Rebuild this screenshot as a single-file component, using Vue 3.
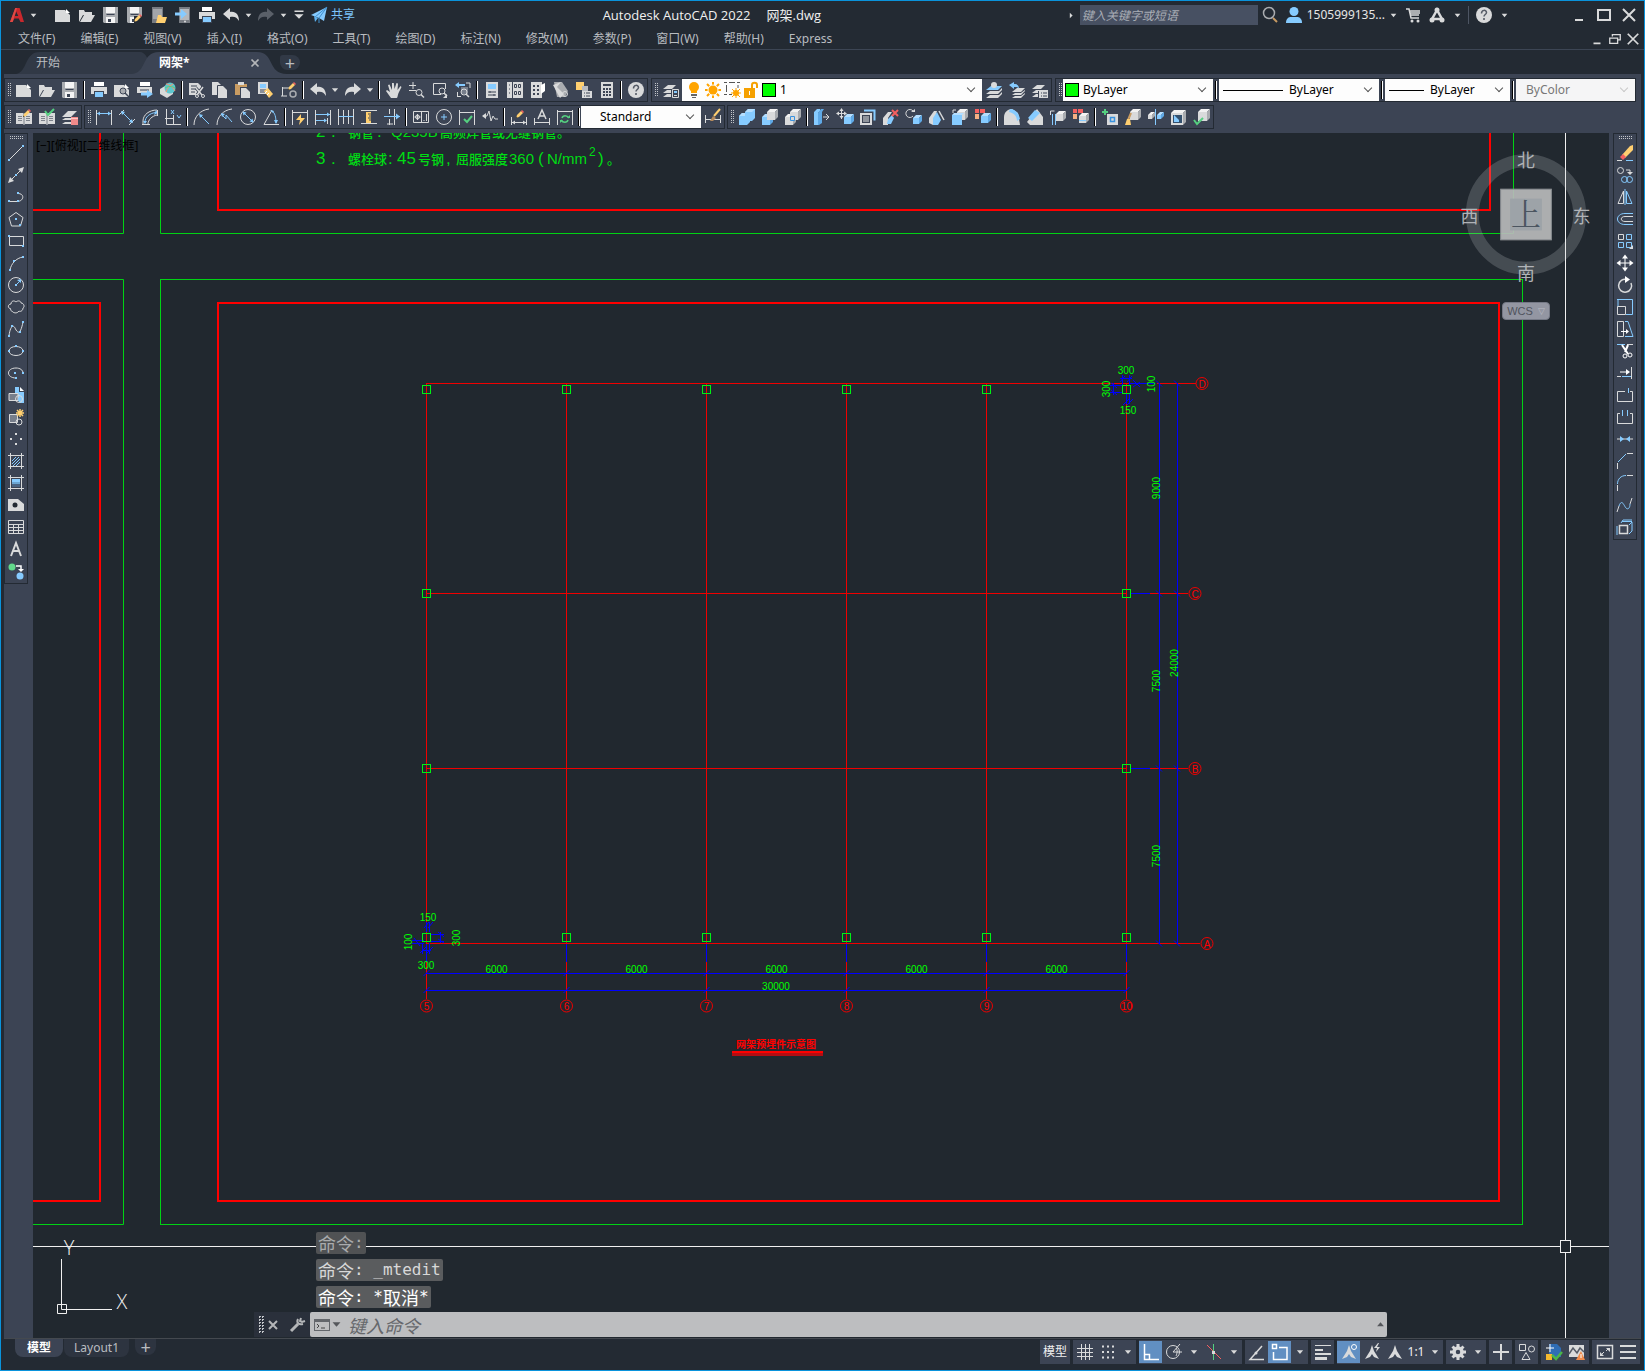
<script setup>
import { ref } from 'vue'

const W = '#d9dadb', B = '#86cbff', Y = '#ffcf70', G = '#55d080', R = '#f46060', K = '#3c4454', S = '#a9acb0'

// stroke, fill and circle helpers for the 16x16 icon set
const s = (d, c = W, w = 1) => `<path d="${d}" fill="none" stroke="${c}" stroke-width="${w}"/>`
const f = (d, c = W) => `<path d="${d}" fill="${c}"/>`
const o = (x, y, r, c = W, w = 1) => `<circle cx="${x}" cy="${y}" r="${r}" fill="none" stroke="${c}" stroke-width="${w}"/>`
const d = (x, y, r, c = W) => `<circle cx="${x}" cy="${y}" r="${r}" fill="${c}"/>`
const q = (...pts) => pts.map(([x, y]) => f(`M${x - 1} ${y - 1}h2v2h-2z`, B)).join('')
const cube = (x, y, n, c = W, t = '#f2f2f2', r = S) =>
  f(`M${x} ${y + 3}h${n}v${n}h-${n}z`, c) + f(`M${x} ${y + 3}l3-3h${n}l-3 3z`, t) + f(`M${x + n} ${y + 3}l3-3v${n}l-3 3z`, r)
const bcube = (x, y, n) => cube(x, y, n, B, '#b5dfff', '#5fa9e6')
const pencil = (x, y) => f(`M${x} ${y + 7}l1-3 4-4 2 2-4 4z`, Y) + f(`M${x + 5} ${y}l1-1 2 2-1 1z`, R) + f(`M${x} ${y + 7}l.5-1.5 1 1z`, '#222')
const lens = (x, y) => o(x, y, 3) + s(`M${x + 2} ${y + 2}l3 3`, W, 1.5)
const floppy = f('M0 0h15v16H1l-1-1z', S) + f('M3 0h9v6H3z', '#f4f4f4') + f('M3 10h9v6H3z', '#f4f4f4') + s('M3.5 7.5h8', K) + f('M5 12h3v3H5z', K)
const printer = f('M3 0h10v4H3z', '#fff') + f('M0 5h16v7H0z') + f('M3 9h10v7H3z', K) + f('M4 10h8v5H4z', B)
const folder = f('M0 15V3h5l1 2h7v3H4z') + f('M1 15L5 8h11l-4 7z')
const page = f('M0 3h10l5 5v7H0z') + f('M11 2l4 4h-4z', '#fff')
const stack = f('M0 7l5-4h8l-4 4z') + f('M0 11l4-3h8l-3 3z') + f('M0 15l4-3h8l-3 3z')
const dim = s('M.5 1v15M15.5 1v15')
const star = s('M8 0v16M0 8h16M2 2l12 12M14 2L2 14', '#ffa400', 2)
const annot = f('M8 1l2 6 5 8-5-2-2-3-2 3-5 2 5-8z')
const openbook = f('M0 4h7l1 1 1-1h7v11H9l-1 1-1-1H0z') + s('M2 7.500h4M2 9.500h4M2 11.500h4M10 7.500h4M10 9.500h4M10 11.500h4M8 5v10', '#7d828b')

const icons = {
  logo: f('M6 0h5l5 16h-4l-2-4H5l-2 4H0zM7 4L5.500 9h4z', '#c9282d') + f('M6 0h2L3 16H0z', '#e04a45'),
  new: page, open: folder, save: floppy, print: printer,
  saveas: floppy + f('M7 9h9v7H7z', '#232a33') + pencil(7, 8),
  mopen: f('M1 0h11v16H1z', '#777b82') + f('M2 2h9v10H2z', '#a2a5aa') + f('M5 16l2-8h3l1 2h5l-2 6z', Y),
  msave: f('M4 0h11v16H4z', '#777b82') + f('M5 2h9v11H5z', '#b5b8bc') + s('M0 7h8', B, 3) + f('M6 2l6 5-6 5z', B) + d(10, 14.5, 1),
  undo: f('M0 7l7-6v4c6-1 9 3 9 9-2-4-5-5-9-4v3z'),
  redo: f('M16 7L9 1v4C3 4 0 8 0 14c2-4 5-5 9-4v3z'),
  redooff: f('M16 7L9 1v4C3 4 0 8 0 14c2-4 5-5 9-4v3z', '#5a6069'),
  caret: f('M3 5h10l-5 6z'),
  more: f('M2 2h12v2H2zM2 7h12l-6 6z'),
  share: f('M0 8L16 0l-3 14-5-3z', B) + s('M4 10l12-10L8 11v5', '#3f90cf') + f('M3 9l1 6 3-4z', '#5fb3f0'),
  search: o(7, 6, 5.5, S, 1.5) + s('M11 11l4 4', '#c89a62', 2),
  user: d(8, 4.500, 4.500, B) + f('M0 16c0-5 3-6 5-6h6c2 0 5 1 5 6z', B),
  cart: s('M1 2h3l2 9h8M4 4h11M5 6h10M5 8h9', W, 1.5) + d(7, 14, 1.5) + d(13, 14, 1.5),
  apps: s('M8 3L3 12h10z', W, 2.500) + d(8, 3, 2.500) + d(3, 13, 2.500) + d(13, 13, 2.500),
  help: d(8, 8, 8) + s('M5.500 6.500c0-4 5-4 5-1 0 2-2.500 2-2.500 4', '#555b66', 1.500) + f('M7.200 11h1.600v2H7.200z', '#555b66'),
  preview: page + lens(9, 9) + d(9, 9, 2.500, S) + o(9, 9, 3, K) + s('M11 11l4 4', K, 1.500),
  plot: f('M3 0h10v4H3z', '#fff') + f('M0 5h15v6H0z') + s('M3 8h9', K) + s('M4 12h7', B, 3) + f('M10 8l6 4-6 4z', B),
  globe: f('M0 7l5-3 8 2v6l-6 4-7-4z') + d(10, 6, 5.500, '#5dc7cf') + s('M6 2c4 0 8 5 9 7M13 2c-4 2-6 5-7 8', '#ff8f6a') + s('M5 6c3-2 7-2 10 0', G),
  cut: f('M0 1h9l3 3v9H0z') + s('M2 4h6M2 7h6M2 10h4', K) + s('M7 6l6 7M14 5l-6 8', K, 3) + s('M7 6l6 7M14 5l-6 8', W, 1.500) + o(8, 14, 1.5) + o(14, 14, 1.5),
  copy: f('M0 0h6l3 3v10H0z') + s('M5.500 3.500h6l3 3v9h-9z', K) + f('M6 4h5l4 4v8H6z'),
  paste: f('M0 2h12v11H0z', '#c99c62') + f('M3 0h6v3H3z') + f('M5 5h7l4 4v7H5z', K) + f('M6 6h5l4 4v6H6z'),
  match: f('M0 0h10v12H0z') + f('M2 2h6v4H2z', B) + s('M2 8h6M2 10h6', K) + f('M6 9l4-3 5 6-4 4z', Y) + s('M9 9l-2 2M11 11l-2 2', '#fff'),
  edit: s('M0 14h6M1.500 5v9M2 6h7') + o(12, 12, 3, S, 1.5) + pencil(7, 1),
  pan: f('M5 16L0 9l1-1 3 2L2 3l1.500-.5L6 8V1h1.800L8.500 7l2-6 1.500.5L11.500 8 14.500 4l1 1-3 6c-1 3-1 5-2 5z'),
  zoom: s('M4 0v7M0 3.500h7M0 8.500h7') + lens(10, 10.500),
  zoomwin: s('M9 12.500H1.500V1.500h12V7') + lens(10, 9) + f('M15 12v4h-4z'),
  zoomprev: s('M2 14.500h4M2.500 10v4M11 1h4v5', W) + f('M6 5h7v7H6z', '#777e8b') + lens(9, 10) + f('M0 3l4-3v2h6v2H4v2z', B),
  props: f('M2 0h12v16H2z') + f('M4 2h8v5H4z', B) + s('M4 10h8M4 13h8M6 9v2M10 12v2', K),
  center: f('M0 0h16v16H0z') + s('M5.500 0v16M2 3h1M2 7h1M2 11h1', K) + s('M7.500 2.500h2v3h-2zM11.500 2.500h2v3h-2zM7.500 9.500h2v3h-2zM11.500 9.500h2v3h-2z', K),
  palette: f('M1 0h11v16H1z') + s('M3 4h2M7 4h2M3 8h2M7 8h2M3 12h2M7 12h2', K, 2) + f('M11 3l4-2v8l-4 3z', '#fff'),
  sheet: f('M1 0h8l6 9-3 6H4z', S) + f('M0 3l8-3-4 5 7 7-4 4z') + o(12, 12, 2.500),
  markup: f('M0 0h8v8H0z', Y) + f('M6 4h6v6H6z', '#b8bbc1') + f('M6 9h10v7H6z') + s('M8 11h1M10 11h4M8 14h1M10 14h4', K),
  calc: f('M2 0h12v16H2z') + f('M4 2h8v2H4z', K) + s('M4 7h2M7 7h2M10 7h2M4 10h2M7 10h2M10 10h2M4 13h2M7 13h2M10 13h2', K, 2),
  layers: stack + f('M8 7h8v9H8z', K) + s('M9.500 7.500h6v8h-6z') + f('M11 9h3v2h-3z', B) + s('M11 13.500h3'),
  lcur: f('M0 8l5-4h11l-4 4z', B) + f('M0 12l4-3h9l3-3v2l-4 4z') + f('M0 16l4-3h9l3-3v2l-4 4z') + d(8, 3, 3),
  lprev: f('M3 10l5-4h8l-4 4z') + f('M3 13l3-2h6l4-3v1l-4 4z') + f('M3 16l3-2h6l4-3v1l-4 4z') + f('M0 3l5-3v2c4 0 5 2 5 5-1-2-3-2-5-2v2z', B),
  lstate: stack + f('M6 9h10v7H6z', K) + f('M7 8h9v8H7z') + s('M9 11h1M11 11h4M9 14h1M11 14h4', K),
  bedit: openbook + pencil(7, 1),
  bsave: openbook + s('M6 2l3 4 6-6', G, 2),
  bdisc: f('M0 8l6-6h9l-6 6z') + f('M0 11l3-2h7v2l-2 0zM0 15l3-2h6v2z') + f('M9 8h7v8H9z', '#f08a8a') + s('M9 9.500h7', '#ffc4c4'),
  dlin: dim + s('M1 4.500h14', B) + f('M1 4.500l3-2v4zM15 4.500l-3-2v4z', B),
  dali: s('M0 6l5-5M10 16l6-6') + s('M3 3l10 10', B) + f('M2 2l4 1-3 3zM14 14l-4-1 3-3z', B),
  darc: s('M1 15V12C1 6 7 1 15 1M6 15c0-4 4-8 9-9') + s('M3 13C3 8 8 4 14 3.500', B) + f('M14 1l2 3-4 2zM1 12h4l-2 3z', B) + s('M0 15.500h8M15.500 1v6'),
  dord: s('M1.500 0v15.500H16M0 9.500h8M8.500 6v9') + s('M6 1l3 4M9 1L6 5M12 6l2 3 2-3', B),
  drad: s('M0 16C0 8 6 1 15 0') + s('M6 6l9 9', B) + f('M5 5l4 1-3 3z', B),
  djog: s('M0 16C0 8 6 1 15 0') + s('M4 5l5 5v-4l6 7', B) + f('M4 4l4 1-3 3z', B),
  ddia: o(8, 8, 7.500) + s('M3 3l10 10', B) + f('M2.500 2.500l4 1-3 3zM13.500 13.500l-4-1 3-3z', B),
  dang: s('M9 1L1 15.500h15') + s('M9 2c3 2 4 6 4 12', B) + f('M10 4l-3-3 4 1zM13 15l-2-4h4z', B),
  dquick: dim + s('M1 3.500h14') + f('M9 5L4 11h4l-1 5 6-7H9z', Y),
  dbase: dim + s('M1 5.500h14M1 11.500h10', B) + f('M15 5.500l-3-2v4zM12 11.500l-3-2v4z', B) + s('M12.500 9v6'),
  dcont: s('M.5 0v16M5.500 1v14M10.500 1v14M15.500 0v16') + s('M1 7.500h14', B),
  dspace: s('M0 1.500h16M0 14.500h16') + f('M5 3h5v11H5z', Y) + s('M7 5h3M8 7h2M7 9h3M8 11h2', K),
  dbreak: s('M5.500 0v5M5.500 10v6M10.500 0v16M3 15h6') + s('M0 7.500h16', B) + f('M16 7.500l-4-3v6z', B),
  tol: s('M.5 2.500h15v11H.5zM8.500 3v10') + o(4.500, 8, 2) + s('M1.500 8h6M4.500 5v6') + s('M11 12v-1M13.500 5v7'),
  cmark: o(8, 8, 7.500) + s('M8 5v6M5 8h6', B),
  insp: dim + s('M1 3.500h14') + s('M5 10l3 3 5-6', G, 2),
  jog: s('M1 7h4l2-5 2 10 2-5 2 3h3') + f('M0 7l4-3v6z'),
  dedit: s('M.5 8v8M15.500 8v8M1 13.500h14') + f('M1 13.500l3-2v4zM15 13.500l-3-2v4z') + pencil(5, 2),
  dtedit: s('M.5 9v7M15.500 9v7M1 13.500h14') + s('M4 10l4-9 4 9M5.500 7h5', W, 1.5),
  dupd: dim + s('M1 2.500h14') + s('M5 9c1-3 5-3 7 0M11 11c-1 3-5 3-7 0', G, 1.500) + f('M10 9h3V6zM3 11h3l-3 3z', G),
  dstyle: s('M.5 6v8M15.500 6v8M1 10.500h14') + f('M5 12l3-5 3 2-3 3z', '#b58a5c') + s('M9 7l6-7', Y, 2),
  union: f('M0 7l3-3h3V3l3-3h7v9l-3 3h-2v1l-3 3H0z', B) + f('M6 3l3-3h7l-3 3zM0 7l3-3h3v3z', '#b5dfff'),
  subt: bcube(0, 5, 8) + cube(5, 0, 8),
  inter: cube(0, 5, 8) + cube(5, 0, 8) + s('M5.500 7.500h4v4h-4z', '#3a93df'),
  extr: f('M0 3l3-3h3v2L4 4v12H0z', B) + f('M4 4l3-4h3L8 3v11l-3 2H4z', '#5fa9e6') + s('M9 8h6M12 5l3 3-3 3'),
  mface: s('M4.500 0v10M0 4.500h9') + f('M4.500-1l2 3h-4zM4.500 10l2-3h-4zM-1 4.500l3-2v4zM10 4.500l-3-2v4z') + bcube(7, 5, 7),
  offs: s('M1 5h10v10H1z', W, 2) + s('M4 1.500h10.500v10', B, 2) + f('M3 7h6v6H3z', '#8f949c'),
  delf: f('M0 16V9l5-6h4l-4 6v7z') + f('M5 10l4-4 2 3-3 6H4z', B) + s('M9 1l6 6M15 1L9 7', R, 2),
  rotf: s('M7 2a4 4 0 1 0 0 5') + f('M5 3h4V0z') + bcube(7, 6, 6),
  taper: f('M0 14V9l5-7h3L4 16z') + f('M4 16V9l4-6 4 8-3 5z', B) + s('M10 2l5 9', W, 1.500),
  copyf: cube(5, 0, 8) + f('M0 6h10v10H0z', B) + f('M0 6l2-2h10l-2 2z', '#b5dfff') + s('M1 4V1h3'),
  colf: f('M0 0h4v4H0z', R) + f('M5 0h5v4H5z', R) + f('M0 5h4v5H0z', '#f5b083') + bcube(6, 4, 7),
  cedge: f('M0 16V8c0-5 4-8 8-8l6 4 2 12z') + f('M6 0c5 0 9 4 10 10l-3 2c0-5-3-8-8-9z', B),
  cedge2: f('M0 13L10 0l6 8v8H3z') + f('M1 9l7-8 5 3-8 8z', B),
  imprint: cube(6, 2, 7) + s('M.5 6V2h4', W) + s('M2.500 5v11M5.500 5v11', B),
  clean: f('M0 0h4v4H0z', R) + f('M5 0h5v4H5z', R) + f('M0 5h4v5H0z', '#f5b083') + cube(6, 4, 7) + s('M6 11.500h7', B),
  sep3d: f('M5 5h11v11H5z') + s('M8.500 8.500h4v4h-4z', '#3a93df', 1.5) + s('M3 0v6M0 3h6', G, 2),
  shell: cube(5, 0, 8) + s('M6 4L3 11', '#c99c62', 2) + f('M0 16l2-6h3l1 6z', Y),
  sepr: cube(0, 3, 4) + bcube(9, 3, 4) + s('M7.500 0v16', B),
  shell2: cube(0, 1, 12) + f('M2 6h9v8H2z', '#33506e') + f('M3 6l5 5v2H3z', B),
  check: cube(4, 0, 9) + s('M0 11l3 4 6-6', G, 2),
  // draw palette
  line: s('M1 15L15 1') + q([1, 15], [15, 1]),
  xline: s('M2 14L14 2') + f('M0 16l2-6 4 4zM16 0l-6 2 4 4z') + q([8, 8]),
  pline: s('M1 12.500h8c7 0 8-8 1-8') + q([1, 12], [10, 4], [10, 12]),
  poly: s('M8 1.500l7 5-2.500 8.500h-9L1 6.500z') + q([8, 8], [12, 14]),
  rect: s('M1.500 3.500h14v9h-14z') + q([1, 3], [15, 13]),
  arc: s('M2 15C3 9 8 3 15 2') + q([2, 15], [6, 6], [15, 2]),
  circle: o(8, 8, 7.500) + q([8, 8]) + s('M8 8l5-5', B) + f('M13 2v4l-4-3z', B),
  cloud: s('M3 10c-4-1-3-5 0-5C3 2 6 1 8 3c2-2 5-1 5 1 3 0 4 4 2 5 0 3-3 4-4 3-2 3-6 2-7 0-1 0-2-1-1-2z'),
  spline: s('M1 15C2 6 5 3 7 7s5 9 8-6') + q([1, 15], [4, 5], [12, 11], [15, 1]),
  ellipse: s('M1 8c0-6 14-6 14 0s-14 6-14 0') + q([1, 8], [8, 3], [15, 8]),
  earc: s('M8 13C-2 13-2 3 8 3c4 0 7 2 7 5') + q([7, 8], [15, 8], [8, 13]),
  insert: f('M7 0h4v5h5v11h-4L7 10z', B) + f('M12 0l4 4h-4z', '#fff') + f('M1 6h9v7H1z', '#777e8b') + s('M1 6.500h9v7H1z') + o(11, 12, 3.500) + q([11, 12]),
  block: f('M1 5h8v8H1z', '#777e8b') + s('M1.500 5.500h8v8h-8z') + o(11, 13, 3) + s('M12 0v8M8 4h8M9 1l6 6M15 1L9 7', Y, 1.500),
  point: f('M7 2h2v2H7zM2 7h2v2H2zM12 7h2v2h-2zM7 12h2v2H7z'),
  hatch: s('M2.500 0v16M13.500 0v16M0 2.500h16M0 13.500h16') + s('M4 8l4-4M4 11l7-7M5 13l7-7M8 13l4-4', B),
  grad: s('M2.500 0v16M13.500 0v16M0 2.500h16M0 13.500h16') + f('M4 4h8v3H4z', B) + f('M4 7h8v2H4z', '#6ba5d2') + f('M4 9h8v3H4z', '#4a6482'),
  region: f('M0 2h10l6 5v7H0z') + d(7, 8, 2.500, '#232a33'),
  table: s('M.5 1.500h15v13H.5zM0 5.500h16M0 8.500h16M0 11.500h16M5.500 5v10M10.500 5v10'),
  mtext: s('M3 15L8 2l5 13M4.500 10h7', W, 2),
  addsel: d(4, 4, 3.500, '#62d98b') + d(12, 13, 3.500, B) + s('M8 3h5v4', '#fff', 1.500) + f('M10 6h6l-3 3z', '#fff'),
  // modify palette
  erase: f('M5 10L13 1l3-1v5l-8 8z', Y) + f('M3 12l3-3 3 3-3 3z', R) + s('M0 15.500h5') + s('M9 15.500h7', B),
  mcopy: o(3.500, 3.500, 3) + s('M9 3h4v3') + f('M10 5h6l-3 3z') + o(7.500, 12.500, 3, B) + o(12.500, 12.500, 3, B),
  mirror: s('M6.500 2v12.500H1z') + s('M9.500 2v12.500H15z', B) + s('M8 0v16', B),
  offset: s('M16 2.500H8C-2 2.500-2 13.500 8 13.500h8', B) + s('M16 5.500H8c-5 0-5 5 0 5h8'),
  array: s('M1.500 1.500h5v5h-5z') + s('M9.500 1.500h5v5h-5zM1.500 9.500h5v5h-5zM9.500 9.500h5v5h-5z', B) + f('M16 12v4h-4z'),
  move: s('M8 1v14M1 8h14', '#fff') + f('M8-.5l3 4H5zM8 16.500l3-4H5zM-.5 8l4-3v6zM16.500 8l-4-3v6z', '#fff'),
  rotate: s('M10 2.500a6.500 6.500 0 1 0 4 3.500', W, 1.500) + f('M8-1l5 3.500L8 6z', '#fff'),
  scale: s('M1 0v8M0 .5h15.500v15H9', B) + s('M.5 7.500h8v8h-8z'),
  stretch: s('M.5.5h6v15h-6z') + s('M8 .5h3l5 15H8', B) + s('M4 10.500h7', '#fff') + f('M9 8l3 2.500L9 13z', '#fff'),
  trim: s('M0 1.500h8', B) + s('M10 1.500h6') + s('M5 2l6 9M11 2L8 9', '#fff', 2) + o(8, 13, 2, '#fff') + o(13, 12, 2, '#fff'),
  extend: s('M14.500 2v12M0 11.500h4') + s('M5 11.500h9', B) + s('M3 7h8', '#fff') + f('M9 4l4 3-4 3z', '#fff'),
  brkpt: s('M8 4.500H.5v10h15v-10H13') + s('M11.500 1v5', B),
  brk: s('M3 4.500H.5v10h15v-10H13') + s('M5.500 1v6M10.500 1v6', B),
  join: s('M0 8h16') + f('M3 5l4 3-4 3zM13 5L9 8l4 3z', B),
  chamfer: s('M.5 10v6M10 .5h6') + s('M1 9l8-8', B),
  fillet: s('M.5 10v6M10 .5h6') + s('M.5 9C.5 4 4 .5 9 .5', B),
  blend: s('M0 15L2 9M13 7l2-6') + s('M2 9c3-8 5 0 7 2s4 0 4-4', B),
  explode: s('M2.500 6.500h8v8h-8z', W, 1.500) + s('M0 7v9M5 2.500h10M4 4l2-3h9M12 6l3-3v9l-3 3', B),
  // status bar
  grid: s('M4.500 0v16M8.500 0v16M12.500 0v16M0 4.500h16M0 8.500h16M0 12.500h16'),
  snap: s('M2 2.500h2M7 2.500h2M12 2.500h2M2 8h2M7 8h2M12 8h2M2 13.500h2M7 13.500h2M12 13.500h2', W, 2),
  ortho: s('M1.500 0v15.500H16M1.500 10.500h5v5', '#fff', 1.500),
  polar: o(7, 8, 6.500) + s('M7 8h9M7 8l7-8M10 4c2 2 1 6 0 8'),
  iso: s('M1 1l14 14', R) + s('M7.500 0v16', G) + f('M6 7h3v3H6z'),
  otrack: s('M15 15.500H1L13 2', W, 1.500) + d(7, 9, 1.500),
  osnap: s('M7 3.500h8v12H1.500V8', '#fff', 1.500) + s('M.5.500h4v4h-4z', '#fff', 1.500),
  lwt: f('M0 1h16v1H0zM0 5h8v2H0zM0 9h16v2H0zM0 13h12v3H0z'),
  ann1: annot + o(13, 3, 2.500, '#fff'),
  ann2: annot + f('M14-1l-4 5h3l-1 4 4-5h-3l2-4z'),
  ann3: annot,
  gear: o(8, 8, 4, W, 3.500) + s('M8 0v3M8 13v3M0 8h3M13 8h3M2.500 2.500l2 2M11.500 11.500l2 2M13.500 2.500l-2 2M4.500 11.500l-2 2', W, 3),
  plus: s('M8 0v16M0 8h16', W, 2),
  isolate: s('M.5.500h6v6h-6zM3 15.500l4-7 4 7z') + o(12.500, 5, 3),
  hw: f('M3 0h8l4 4v9H3z', '#2f6db5') + s('M0 4h8M4 0v8', '#fff') + f('M0 10h6v6H0z', '#f5b92f') + s('M6 11l4 4 6-7', '#4bb648', 2.500),
  graph: f('M0 1h15v12H0z') + s('M0 10l4-6 4 5 3-5 4 4', '#555b66', 1.500) + f('M7 16l5-9 4 9z', '#f08b4b') + s('M12 10v4', '#fff'),
  full: s('M.5 1.500h15v13H.5z', W, 1.500) + f('M9 4h4v4zM3 8v4h4z') + s('M4 11l3-3M9 7l3-3'),
  menu: f('M0 1h16v2H0zM0 7h16v2H0zM0 13h16v2H0z'),
  wmin: s('M4 13h8', W, 2), wmax: s('M2 3h12v10H2z', W, 2), wclose: s('M2 2l12 12M14 2L2 14', W, 2),
  wrest: s('M5 5V3h9v6h-3M2 7h9v6H2z', W, 1.500),
  tri: f('M5 3l5 5-5 5z'), up: f('M2 11h12L8 4z', '#55575b'),
  cmdicon: f('M0 2h16v12H0z', '#63666b') + f('M1 5h14v8H1z', '#bdbec0') + s('M3 7l2 2-2 2M7 11h4', '#444'),
  wrench: s('M2 14l7-7', '#b4b6b8', 3) + s('M9 2c-2 4 1 6 5 5M12 1l-1 3 2 1 3-1', '#b4b6b8', 2),
  x: s('M4 4l8 8M12 4l-8 8', '#b4b6b8', 2),
  bulb: d(8, 5, 5, '#ffa400') + f('M5 8h6v3H5z', '#ffa400') + f('M5 12h6v2H5zM6 15h4v1H6z', '#666'),
  sun: star + d(8, 8, 5.500, '#fdfdfd') + d(8, 8, 4.500, '#ffa400'),
  vp: s('M2.500 3v7M5 .5h6M14 3v3M5 12.500h3M0 .5h3M13 .5h3M0 12.500h3', '#555') + s('M12 6v10M7 11h10M8 7l8 8M16 7l-8 8', '#ffa400') + d(12, 11, 3, '#ffa400'),
  lock: f('M1 6h11v10H1z', '#f5a000') + s('M9 7V3c0-3 5-3 5 0v3', '#f5a000', 2) + f('M6 9h1v4H6z', '#fff'),
}

const quick = [['new', '新建'], ['open', '打开'], ['save', '保存'], ['saveas', '另存为'], ['mopen', '从移动设备打开'], ['msave', '保存到移动设备'], ['print', '打印']]
const menus = ['文件(F)', '编辑(E)', '视图(V)', '插入(I)', '格式(O)', '工具(T)', '绘图(D)', '标注(N)', '修改(M)', '参数(P)', '窗口(W)', '帮助(H)', 'Express']
const std = 'new open save | print preview plot globe | cut copy paste match edit | undo caret redo caret | pan zoom zoomwin zoomprev | props center palette sheet markup calc | help'.split(' ')
const refedit = 'bedit bsave bdisc'.split(' ')
const dims = 'dlin dali darc dord | drad djog ddia dang | dquick dbase dcont dspace dbreak | tol cmark insp jog | dedit dtedit dupd |'.split(' ')
const solids = 'union subt inter | extr mface offs delf rotf taper copyf colf | cedge cedge2 imprint clean | sep3d shell sepr shell2 check'.split(' ')
const draw = 'line xline pline poly rect arc circle cloud spline ellipse earc insert block point hatch grad region table mtext addsel'.split(' ')
const modify = 'erase mcopy mirror offset array move rotate scale stretch trim extend brkpt brk join chamfer fillet blend explode'.split(' ')
const status = [['grid', 'snap', 'caret'], ['ortho', 'polar', 'caret', 'iso', 'caret'], ['otrack', 'osnap', 'caret'], ['lwt'], ['ann1', 'ann2', 'ann3', '1:1', 'caret'], ['gear', 'caret'], ['plus'], ['isolate'], ['hw', 'graph'], ['full', 'menu']]
const active = ['ortho', 'osnap', 'ann1']

// model-space geometry
const cols = [426.5, 566.5, 706.5, 846.5, 986.5, 1126.5]
const rows = [
  { id: 'D', y: 383.5, bx: 1202 }, { id: 'C', y: 593.5, bx: 1195 },
  { id: 'B', y: 768.5, bx: 1195 }, { id: 'A', y: 943.5, bx: 1207 },
]
const pads = [
  ...cols.map((x) => [x, 389.5]), ...cols.map((x) => [x, 937.5]),
  [426.5, 593.5], [1126.5, 593.5], [426.5, 768.5], [1126.5, 768.5],
]
const vdims = [['9000', 1160, 488], ['7500', 1160, 681], ['7500', 1160, 856], ['24000', 1178, 663], ['300', 1110, 389], ['100', 1155, 384], ['100', 412, 942], ['300', 460, 938]]
const hdims = [['300', 1126, 374], ['150', 1128, 414], ['150', 428, 921], ['300', 426, 969], ['30000', 776, 990]]
const command = ref('')
const query = ref('')
</script>

<template>
  <div class="window">
    <header class="titlebar">
      <button class="logo" aria-label="应用程序菜单"><svg viewBox="0 0 16 16" v-html="icons.logo" /></button>
      <button class="mini" aria-label="展开"><svg viewBox="0 0 16 16" v-html="icons.caret" /></button>
      <div class="quick">
        <button v-for="[n, t] in quick" :key="n" class="tool" :aria-label="t"><svg viewBox="0 0 16 16" v-html="icons[n]" /></button>
        <button class="tool" aria-label="放弃"><svg viewBox="0 0 16 16" v-html="icons.undo" /></button>
        <button class="mini" aria-label="放弃列表"><svg viewBox="0 0 16 16" v-html="icons.caret" /></button>
        <button class="tool" aria-label="重做"><svg viewBox="0 0 16 16" v-html="icons.redooff" /></button>
        <button class="mini" aria-label="重做列表"><svg viewBox="0 0 16 16" v-html="icons.caret" /></button>
        <button class="mini wide" aria-label="自定义"><svg viewBox="0 0 16 16" v-html="icons.more" /></button>
        <button class="share"><svg viewBox="0 0 16 16" v-html="icons.share" />共享</button>
      </div>
      <h1 class="title"><span>Autodesk AutoCAD 2022</span><span>网架.dwg</span></h1>
      <div class="account">
        <button class="mini" aria-label="收起"><svg viewBox="0 0 16 16" v-html="icons.tri" /></button>
        <input v-model="query" class="search" type="text" placeholder="键入关键字或短语" aria-label="搜索">
        <button class="tool" aria-label="搜索"><svg viewBox="0 0 16 16" v-html="icons.search" /></button>
        <button class="user"><svg viewBox="0 0 16 16" v-html="icons.user" />1505999135...</button>
        <button class="mini" aria-label="帐户"><svg viewBox="0 0 16 16" v-html="icons.caret" /></button>
        <button class="tool" aria-label="商店"><svg viewBox="0 0 16 16" v-html="icons.cart" /></button>
        <button class="tool" aria-label="应用"><svg viewBox="0 0 16 16" v-html="icons.apps" /></button>
        <button class="mini" aria-label="应用列表"><svg viewBox="0 0 16 16" v-html="icons.caret" /></button>
        <span class="rule" />
        <button class="tool" aria-label="帮助"><svg viewBox="0 0 16 16" v-html="icons.help" /></button>
        <button class="mini" aria-label="帮助列表"><svg viewBox="0 0 16 16" v-html="icons.caret" /></button>
      </div>
      <div class="winbtns">
        <button class="tool" aria-label="最小化"><svg viewBox="0 0 16 16" v-html="icons.wmin" /></button>
        <button class="tool" aria-label="最大化"><svg viewBox="0 0 16 16" v-html="icons.wmax" /></button>
        <button class="tool" aria-label="关闭"><svg viewBox="0 0 16 16" v-html="icons.wclose" /></button>
      </div>
    </header>

    <nav class="menubar">
      <button v-for="m in menus" :key="m" class="menu">{{ m }}</button>
      <div class="docbtns">
        <button aria-label="最小化图形"><svg viewBox="0 0 16 16" v-html="icons.wmin" /></button>
        <button aria-label="还原图形"><svg viewBox="0 0 16 16" v-html="icons.wrest" /></button>
        <button aria-label="关闭图形"><svg viewBox="0 0 16 16" v-html="icons.wclose" /></button>
      </div>
    </nav>

    <div class="filetabs">
      <button class="ftab">
        <svg viewBox="0 0 136 22" preserveAspectRatio="none"><path d="M0 22C12 20 8 0 24 0H124Q132 0 136 22Z" fill="#313946" /></svg>
        <span>开始</span>
      </button>
      <div class="ftab on">
        <svg viewBox="0 0 156 22" preserveAspectRatio="none"><path d="M0 22C16 22 10 0 28 0H126C144 0 136 22 156 22Z" fill="#3c4454" /></svg>
        <span>网架*</span>
        <button class="close" aria-label="关闭"><svg viewBox="0 0 16 16" v-html="icons.x" /></button>
      </div>
      <button class="fadd">+</button>
    </div>

    <div class="work">
      <div class="toolrow">
        <div class="bar">
          <i class="grip" />
          <template v-for="(n, i) in std" :key="i">
            <i v-if="n === '|'" class="sep" />
            <button v-else :class="n === 'caret' ? 'drop' : 'btn'" :aria-label="n"><svg viewBox="0 0 16 16" v-html="icons[n]" /></button>
          </template>
        </div>
        <div class="bar">
          <i class="grip" />
          <button class="btn" aria-label="图层特性"><svg viewBox="0 0 16 16" v-html="icons.layers" /></button>
          <div class="combo layer">
            <select aria-label="图层"><option>1</option></select>
            <div class="deco">
              <svg v-for="n in ['bulb', 'sun', 'vp', 'lock']" :key="n" viewBox="0 0 16 16" v-html="icons[n]" />
              <b class="swatch" />
            </div>
          </div>
          <button v-for="n in ['lcur', 'lprev', 'lstate']" :key="n" class="btn" :aria-label="n"><svg viewBox="0 0 16 16" v-html="icons[n]" /></button>
        </div>
        <div class="bar">
          <i class="grip" />
          <div class="combo color"><select aria-label="颜色"><option>ByLayer</option></select><div class="deco"><b class="swatch" /></div></div>
          <i class="sep" />
          <div class="combo ltype"><select aria-label="线型"><option>ByLayer</option></select><div class="deco"><b class="dash" /></div></div>
          <i class="sep" />
          <div class="combo lweight"><select aria-label="线宽"><option>ByLayer</option></select><div class="deco"><b class="dash" /></div></div>
          <i class="sep" />
          <div class="combo pstyle"><select aria-label="打印样式" disabled><option>ByColor</option></select></div>
        </div>
      </div>

      <div class="toolrow">
        <div class="bar">
          <i class="grip" />
          <button v-for="n in refedit" :key="n" class="btn" :aria-label="n"><svg viewBox="0 0 16 16" v-html="icons[n]" /></button>
        </div>
        <div class="bar">
          <i class="grip" />
          <template v-for="(n, i) in dims" :key="i">
            <i v-if="n === '|'" class="sep" />
            <button v-else class="btn" :aria-label="n"><svg viewBox="0 0 16 16" v-html="icons[n]" /></button>
          </template>
          <div class="combo dstyle"><select aria-label="标注样式"><option>Standard</option></select></div>
          <button class="btn" aria-label="标注样式管理"><svg viewBox="0 0 16 16" v-html="icons.dstyle" /></button>
        </div>
        <div class="bar">
          <i class="grip" />
          <template v-for="(n, i) in solids" :key="i">
            <i v-if="n === '|'" class="sep" />
            <button v-else class="btn" :aria-label="n"><svg viewBox="0 0 16 16" v-html="icons[n]" /></button>
          </template>
        </div>
      </div>

      <div class="stage">
        <aside class="palette">
          <i class="grip" />
          <button v-for="n in draw" :key="n" :aria-label="n"><svg viewBox="0 0 16 16" v-html="icons[n]" /></button>
        </aside>

        <main class="canvas">
          <svg class="model" viewBox="33 133 1576 1205" preserveAspectRatio="xMidYMid slice">
            <g class="note">
              <text y="137">
                <tspan x="316">2</tspan><tspan x="331">.</tspan><tspan x="348" class="cjk">钢管</tspan><tspan x="377">:</tspan>
                <tspan x="391" class="narrow">Q235B</tspan><tspan x="440" class="cjk">高频焊管或无缝钢管。</tspan>
              </text>
              <text y="164">
                <tspan x="316">3</tspan><tspan x="331">.</tspan><tspan x="348" class="cjk">螺栓球</tspan><tspan x="388">:</tspan>
                <tspan x="397">45</tspan><tspan x="418" class="cjk">号钢</tspan><tspan x="446">,</tspan>
                <tspan x="456" class="cjk">屈服强度</tspan><tspan x="509" class="narrow">360</tspan><tspan x="538">(</tspan>
                <tspan x="547" class="narrow">N/mm</tspan><tspan x="589" y="156" class="sup">2</tspan><tspan x="598" y="164">)</tspan><tspan x="607" class="cjk">。</tspan>
              </text>
            </g>

            <g class="green">
              <path d="M33 233.5H123.500V133M160.500 133V233.500H1513.500V133M33 279.500H123.500V1224.500H33" />
              <rect x="160.5" y="279.500" width="1362" height="945" />
            </g>
            <g class="red thick">
              <path d="M33 210H100V133M218 133V210H1490V133M33 303H100V1201H33" />
              <rect x="218" y="303" width="1281" height="898" />
            </g>

            <g class="red">
              <path v-for="x in cols" :key="x" :d="`M${x} 383.500V943M${x} 962V999`" />
              <path d="M426 383.500H1134M1157 383.500H1196M426 593.500H1126M1150 593.500H1188M426 768.500H1126M1150 768.500H1188M426 943.500H1200" />
              <circle v-for="r in rows" :key="r.id" :cx="r.bx" :cy="r.y" r="6" />
              <circle v-for="x in cols" :key="x" :cx="x" cy="1006" r="6" />
            </g>
            <g class="blue">
              <path v-for="x in cols" :key="x" :d="`M${x} 944V962M${x - 3} 976l6-6M${x - 3} 993l6-6`" />
              <path d="M426 973.500H1127M426 990.500H1127M1159.500 383V944M1177.500 383V944M1131 593.500H1150M1131 768.500H1150" />
              <path v-for="r in rows" :key="r.id" :d="`M1156 ${r.y - 3}l6 6M1174 ${r.y - 3}l6 6`" />
              <path d="M1122.500 375V385M1129.500 375V385M1120 382l5-6M1127 382l5-6M1120 378.500H1132M1110 385.500H1122M1110 392.500H1122M1113.500 383V395M1111 383l6 5M1111 390l6 5M1130 383.500H1155M1133 380l7 7M1133 387l7-5M1126.500 394V404M1129.500 394V404M1123 405l6-6M1127 405l6-6" />
              <path d="M426.500 922V932M429.500 922V932M424 928l5-6M428 928l5-6M431 934.500H444M431 941.500H444M440.500 932V943M438 932l6 5M438 939l6 4M412 940.500H424M412 943.500H424M414 938l6 8M422.500 943V954M429.500 943V954M420 953l6-6M427 953l6-6M422 950.500H431" />
            </g>
            <g class="green pads">
              <rect v-for="([x, y], i) in pads" :key="i" :x="x - 4" :y="y - 4" width="8" height="8" />
            </g>

            <g class="dimtext">
              <text v-for="x in cols.slice(0, 5)" :key="x" :x="x + 70" y="973">6000</text>
              <text v-for="([t, x, y], i) in hdims" :key="i" :x="x" :y="y">{{ t }}</text>
              <text v-for="([t, x, y], i) in vdims" :key="i" :transform="`translate(${x} ${y}) rotate(-90)`">{{ t }}</text>
            </g>
            <g class="bubbletext">
              <text v-for="(x, i) in cols" :key="x" :x="x" y="1010">{{ i + 5 }}</text>
              <text v-for="r in rows" :key="r.id" :x="r.bx" :y="r.y + 4">{{ r.id }}</text>
            </g>
            <text class="caption" x="776" y="1048">网架预埋件示意图</text>
            <path d="M732 1052H823" stroke="#f00" stroke-width="2" />
            <path d="M732 1054.500H823" stroke="#b30d12" stroke-width="3" />

            <g class="cursor">
              <path d="M33 1246.500H1609M1565.500 133V1240M1565.500 1253V1338" />
              <rect x="1560.500" y="1240.500" width="10" height="12" fill="#21282f" />
              <path d="M61.500 1259V1309.500H112M57.500 1304.500h9v9h-9z" />
            </g>
            <text class="axis" x="69" y="1255">Y</text>
            <text class="axis" x="122" y="1309">X</text>
          </svg>

          <p class="viewlabel">[−][俯视][二维线框]</p>

          <div class="viewcube">
            <svg viewBox="0 0 132 170">
              <circle cx="66" cy="82" r="54" fill="none" stroke="#c8ccd2" stroke-opacity=".22" stroke-width="13" />
              <rect x="40.500" y="56.500" width="51" height="51" fill="#b8babb" fill-opacity=".92" stroke="#8b8f93" />
              <rect x="50" y="66" width="32" height="32" fill="#9da3a8" />
              <text x="66" y="93" class="top">上</text>
              <text x="66" y="34">北</text><text x="66" y="148">南</text><text x="9" y="91">西</text><text x="122" y="91">东</text>
            </svg>
            <button class="wcs">WCS <span>▽</span></button>
          </div>

          <section class="command">
            <ul>
              <li>命令<code>:</code></li>
              <li>命令<code>: _mtedit</code></li>
              <li>命令<code>: *</code>取消<code>*</code></li>
            </ul>
            <div class="cmdbar">
              <i class="grip" />
              <button aria-label="关闭命令行"><svg viewBox="0 0 16 16" v-html="icons.x" /></button>
              <button class="cfg" aria-label="自定义"><svg viewBox="0 0 16 16" v-html="icons.wrench" /></button>
              <div class="cmdinput">
                <svg viewBox="0 0 16 16" v-html="icons.cmdicon" />
                <svg class="dn" viewBox="0 0 16 16"><path d="M1 4h14l-7 8z" fill="#55575b" /></svg>
                <input v-model="command" type="text" placeholder="键入命令" aria-label="命令">
                <svg class="dn" viewBox="0 0 16 16" v-html="icons.up" />
              </div>
            </div>
          </section>
        </main>

        <aside class="palette right">
          <i class="grip" />
          <button v-for="n in modify" :key="n" :aria-label="n"><svg viewBox="0 0 16 16" v-html="icons[n]" /></button>
        </aside>
      </div>
    </div>

    <footer class="footer">
      <div class="layouts">
        <button class="ltab on">模型</button>
        <button class="ltab">Layout1</button>
        <button class="ltab add">+</button>
      </div>
      <div class="status">
        <div class="sgroup"><button class="stext">模型</button></div>
        <div v-for="(g, i) in status" :key="i" class="sgroup">
          <template v-for="(n, j) in g" :key="j">
            <button v-if="n === '1:1'" class="ratio">1:1</button>
            <button v-else :class="[n === 'caret' ? 'sdrop' : 'sbtn', { on: active.includes(n) }]" :aria-label="n"><svg viewBox="0 0 16 16" v-html="icons[n]" /></button>
          </template>
        </div>
      </div>
    </footer>
  </div>
</template>

<style>
body { margin: 0; background: #232a33; }
</style>

<style scoped>
* { box-sizing: border-box; }
.window {
  display: flex; flex-direction: column; min-height: 100vh;
  border: 1px solid #0a93dc; background: #232a33; color: #b9bcc0;
  font: 12px/16px "Noto Sans", "Noto Sans CJK SC", sans-serif;
}
button { display: flex; align-items: center; justify-content: center; flex: none; padding: 0; border: 0; background: none; color: inherit; font: inherit; }
svg { display: block; flex: none; width: 16px; height: 16px; overflow: visible; }

.titlebar { display: flex; align-items: center; height: 28px; padding: 0 3px 0 9px; }
.logo { width: 14px; }
.logo svg { width: 14px; }
.mini { width: 16px; height: 20px; }
.mini svg { width: 9px; height: 9px; }
.mini.wide { width: 18px; }
.mini.wide svg { width: 12px; height: 12px; }
.tool { width: 24px; height: 24px; }
.titlebar > .mini { margin-left: 1px; }
.quick { display: flex; align-items: center; margin-left: 10px; }
.quick .mini { width: 11px; }
.quick .mini.wide { width: 18px; margin-left: 1px; }
.share { gap: 4px; margin-left: 3px; color: #7cc4fb; }
.title { display: flex; flex: 1; justify-content: center; gap: 16px; margin: 0; padding-left: 5px; color: #f0f0f0; font: 13px/16px "Open Sans", "Noto Sans CJK SC", sans-serif; }
.account { display: flex; align-items: center; }
.search { width: 178px; height: 20px; padding: 0 2px; border: 0; background: #475062; color: #d0d2d6; font: italic 12px/16px "Noto Sans", "Noto Sans CJK SC", sans-serif; }
.search::placeholder { color: #a9adb5; opacity: 1; }
.user { gap: 5px; margin-left: 4px; color: #e6e6e6; }
.rule { width: 1px; height: 18px; margin: 0 3px; background: #4d5563; }
.winbtns { display: flex; gap: 1px; margin-left: 55px; }

.menubar { display: flex; align-items: center; gap: 25px; height: 20px; padding: 0 4px 0 17px; }
.docbtns { display: flex; gap: 4px; margin-left: auto; }
.docbtns svg { width: 14px; height: 14px; }

.filetabs { display: flex; align-items: flex-end; height: 25px; padding-left: 15px; border-top: 1px solid #3c4554; }
.ftab { position: relative; display: flex; align-items: center; justify-content: flex-start; width: 136px; height: 22px; padding-left: 20px; }
.ftab > svg { position: absolute; inset: 0; width: 100%; height: 22px; }
.ftab span { position: relative; }
.ftab.on { justify-content: space-between; width: 156px; margin-left: -21px; padding: 0 25px 0 28px; color: #fff; font-weight: 700; }
.close { position: relative; }
.close svg { width: 14px; height: 14px; }
.fadd { width: 20px; height: 15px; margin: 0 0 4px -7px; border-radius: 3px 8px 8px; background: #313946; font-size: 18px; }

.work { display: flex; flex: 1; flex-direction: column; margin: 0 3px; padding-top: 4px; background: #3c4454; }
.toolrow { display: flex; gap: 3px; height: 24px; margin-bottom: 3px; }
.toolrow + .toolrow { gap: 2px; margin-bottom: 4px; }
.bar { display: flex; align-items: center; border: 1px solid #232a33; }
.grip { display: block; flex: none; width: 4px; height: 14px; margin: 0 1px 0 2px; background: conic-gradient(#c3c6ca 25%, transparent 0) 0 0 / 2px 2px; }
.btn { width: 23px; height: 20px; }
.drop { width: 12px; height: 20px; }
.drop svg { width: 10px; height: 10px; }
.sep { flex: none; width: 2px; height: 18px; margin: 0 2px; border-left: 1px solid #000; background: #fff; }
.combo { position: relative; flex: none; align-self: stretch; }
.combo::after { content: ""; position: absolute; top: 6px; right: 8px; width: 5px; height: 5px; border: solid #555; border-width: 0 1px 1px 0; rotate: 45deg; pointer-events: none; }
.combo select { display: block; width: 100%; height: 100%; padding: 0; border: 0; border-radius: 0; appearance: none; background: #fdfdfd; color: #000; font: 12px/16px "Noto Sans", sans-serif; opacity: 1; }
.deco { position: absolute; inset: 0 auto 0 4px; display: flex; align-items: center; gap: 3px; pointer-events: none; }
.swatch { display: block; width: 14px; height: 14px; border: 1px solid #000; background: #0f0; }
.dash { display: block; width: 60px; height: 1px; background: #000; }
.layer { width: 300px; }
.layer select { padding-left: 98px; }
.color { width: 150px; }
.color select { padding-left: 20px; }
.color .deco { left: 2px; }
.ltype { width: 160px; }
.ltype select { padding-left: 70px; }
.lweight { width: 125px; }
.lweight .dash { width: 35px; }
.lweight select { padding-left: 45px; }
.pstyle { width: 119px; }
.pstyle select { padding-left: 10px; color: #777; background: #f5f5f6; }
.pstyle::after { border-color: #c8c8c8; }
.dstyle { width: 120px; margin-left: -1px; }
.dstyle select { padding-left: 19px; }

.stage { display: flex; flex: 1; align-items: flex-start; }
.palette { display: flex; flex: none; flex-direction: column; align-items: center; width: 24px; margin-right: 5px; padding-bottom: 1px; border: 1px solid #232a33; }
.palette.right { margin: 0 4px 0 4px; }
.palette button { width: 22px; height: 22px; }
.palette .grip { width: 14px; height: 4px; margin: 2px 0; }
.canvas { position: relative; flex: 1; align-self: stretch; min-width: 0; overflow: hidden; background: #21282f; }
.model { position: absolute; inset: 0; width: 100%; height: 100%; overflow: hidden; }
.model .green { fill: none; stroke: #00d214; }
.model .red { fill: none; stroke: #f00000; }
.model .thick { stroke: #f00; stroke-width: 2; }
.model .blue { fill: none; stroke: #0000ff; }
.model .pads { stroke: #00f014; }
.note { fill: #00dc14; font: 17px "Liberation Sans", sans-serif; }
.narrow { font-size: 15px; }
.cjk { font: 500 13px "Noto Sans CJK SC", sans-serif; }
.sup { font-size: 12px; }
.dimtext { fill: #00ff00; font: 10px "Liberation Sans", sans-serif; text-anchor: middle; }
.bubbletext { fill: #f00; font: 10px "Liberation Sans", sans-serif; text-anchor: middle; }
.caption { fill: #f00; font: 700 10px "Noto Sans CJK SC", sans-serif; text-anchor: middle; }
.cursor { fill: none; stroke: #f0f0f0; }
.axis { fill: #f0f0f0; font: 300 20px "Open Sans", sans-serif; text-anchor: middle; }
.viewlabel { position: absolute; top: 5px; left: 3px; margin: 0; color: #000; }
.viewcube { position: absolute; top: 0; right: 17px; display: flex; flex-direction: column; align-items: center; width: 132px; }
.viewcube > svg { width: 132px; height: 169px; }
.viewcube text { fill: #b0b3b7; font: 18px "Noto Sans CJK SC", sans-serif; text-anchor: middle; }
.viewcube .top { fill: #4b5560; font: 30px "Noto Serif CJK SC", "Noto Sans CJK SC", serif; }
.wcs { gap: 5px; width: 48px; height: 18px; border: 1px solid #757986; border-radius: 4px; background: #9396a2; color: #4f535d; font: 11px/14px "Liberation Sans", sans-serif; }
.wcs span { color: #b9bcc4; font-size: 9px; }

.command { position: absolute; right: 222px; bottom: 1px; left: 221px; }
.command ul { display: flex; flex-direction: column; align-items: flex-start; gap: 5px; margin: 0 0 4px 62px; padding: 0; list-style: none; }
.command li { display: flex; align-items: center; height: 22px; padding: 0 2px; border-radius: 2px; background: #5a5c5e; color: #d8d8d8; font: 18px/22px "Noto Sans CJK SC", sans-serif; }
.command li:first-child { background: #505254; color: #a9abad; }
.command li:last-child { color: #fff; }
.command code { font: 16px/22px "DejaVu Sans Mono", monospace; white-space: pre; }
.cmdbar { display: flex; align-items: center; height: 25px; background: #2a303b; }
.cmdbar .grip { width: 6px; height: 18px; margin: 0 1px 0 4px; background-size: 3px 3px; }
.cmdbar > button { width: 16px; }
.cmdbar > .cfg { margin: 0 5px 0 8px; }
.cmdinput { display: flex; flex: 1; align-items: center; align-self: stretch; padding: 0 2px 0 4px; border-radius: 2px; background: #bdbec0; }
.cmdinput .dn { width: 9px; height: 9px; margin-left: 2px; }
.cmdinput input { flex: 1; min-width: 0; height: 23px; padding: 0 0 0 7px; border: 0; background: none; color: #222; font: italic 18px/22px "Noto Sans CJK SC", sans-serif; }
.cmdinput input::placeholder { color: #66686c; opacity: 1; }

.footer { display: flex; justify-content: space-between; height: 32px; margin: 0 3px; border-top: 1px solid #44494f; }
.layouts { display: flex; padding-left: 11px; }
.ltab { height: 18px; padding: 0 12px; border-radius: 0 0 8px 8px; background: #2d3440; }
.ltab.on { background: #3c4454; color: #fff; font-weight: 700; }
.ltab + .ltab { margin-left: 1px; padding: 0 10px; }
.ltab.add { width: 21px; height: 16px; margin-left: 6px; padding: 0; font-size: 18px; }
.status { display: flex; gap: 3px; height: 24px; margin: 1px 1px 0 0; }
.sgroup { display: flex; align-items: center; background: #3c4454; }
.sgroup:nth-last-child(-n+2) { padding: 0 1px; }
.stext { width: 30px; color: #f0f0f0; }
.sbtn { width: 23px; height: 22px; }
.sbtn.on { background: #618fc2; }
.sdrop { width: 17px; height: 22px; }
.sdrop svg { width: 10px; height: 10px; }
.ratio { width: 20px; color: #f0f0f0; }
</style>
